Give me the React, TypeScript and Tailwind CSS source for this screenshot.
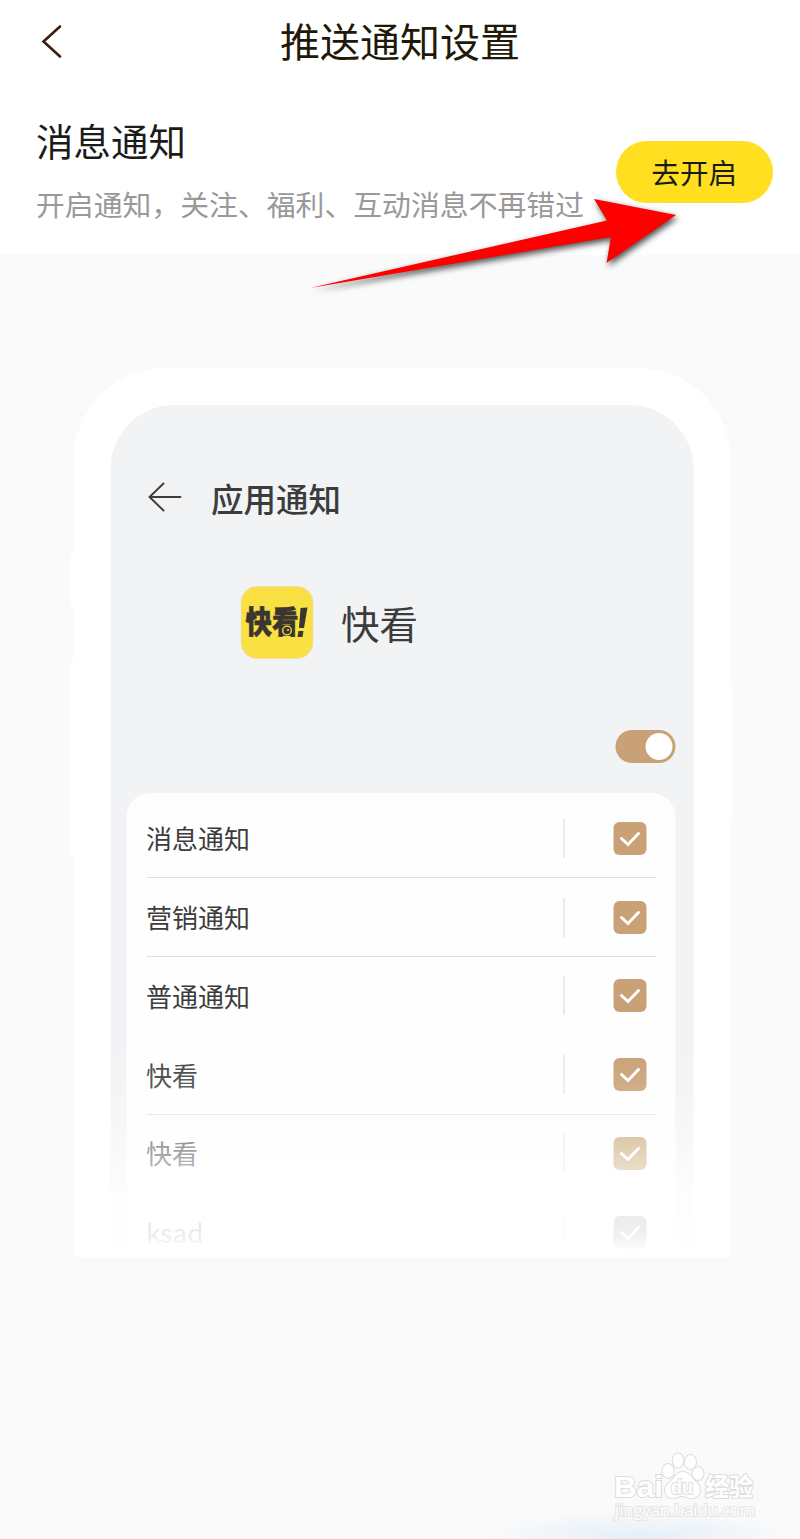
import clsx from "clsx";

const channels = [
  { name: "消息通知", divider: true, box: "bg-[#c9a176]" },
  { name: "营销通知", divider: true, box: "bg-[#c9a176]" },
  { name: "普通通知", divider: false, box: "bg-[#c9a176]" },
  { name: "快看", divider: true, box: "bg-[#c79d70]" },
  { name: "快看", divider: false, box: "bg-[#c3a065]" },
  { name: "ksad", divider: false, box: "bg-[#6e6a68]" },
];

function Checkbox({ className }: { className: string }) {
  return (
    <div className={clsx("flex h-[33px] w-[33px] items-center justify-center rounded-[6px]", className)}>
      <svg width="33" height="33" viewBox="0 0 33 33" fill="none">
        <path d="M8 16.5 L14.5 22.5 L25 11.5" stroke="#fff" strokeWidth="3" strokeLinecap="round" />
      </svg>
    </div>
  );
}

function AppIcon() {
  return (
    <svg width="73" height="73" viewBox="0 0 73 73">
      <rect x="0.5" y="0.5" width="72" height="72" rx="16" fill="#fae143" stroke="#f3d9b5" strokeWidth="0.8" />
      <text
        x="5"
        y="47"
        fontSize="31"
        fontWeight="900"
        fill="#3b3530"
        stroke="#3b3530"
        strokeWidth="0.6"
        textLength="53"
        lengthAdjust="spacingAndGlyphs"
      >
        快看
      </text>
      <path d="M60 22 L67 21.5 L63.5 42 L58.5 42 Z M58 45 L63 45 L62 51 L57 51 Z" fill="#3b3530" />
      <circle cx="46.5" cy="44.5" r="4.3" fill="#3b3530" stroke="#fae143" strokeWidth="1.3" />
      <circle cx="47.5" cy="44" r="1" fill="#fae143" />
    </svg>
  );
}

function PhonePreview() {
  return (
    <div className="relative mx-auto mt-[113px] h-[889px] w-[657px] translate-x-[1.5px] rounded-t-[92px] bg-white px-[37px] pt-[37px]">
      {/* side buttons */}
      <div className="absolute top-[187px] -left-[3px] h-[50px] w-[3px] bg-white" />
      <div className="absolute top-[292px] -left-[3px] h-[198px] w-[3px] bg-white" />
      <div className="absolute top-[313px] -right-[2px] h-[139px] w-[2px] bg-white" />

      <div className="flex h-[852px] flex-col rounded-t-[64px] bg-[#f1f3f5] pt-[66px] pr-[18px] pl-4 text-[#3c3c3c]">
        <div className="flex h-[54px] items-center pl-[21px]">
          <svg width="35" height="32" viewBox="0 0 35 32" fill="none" stroke="#3c3c3c" strokeWidth="1.9" strokeLinecap="round">
            <path d="M2 15 H33 M16 1.5 L2 15 L16 28.5" />
          </svg>
          <span className="ml-[29px] text-[32.5px] leading-[54px] font-medium">应用通知</span>
        </div>

        <div className="mt-[60.5px] flex h-[73px] items-center pl-[114px]">
          <AppIcon />
          <span className="ml-[28px] text-[38.5px] leading-[73px]">快看</span>
        </div>

        <div className="mt-[71.5px] flex h-[33px] w-[60px] items-center justify-end self-end rounded-full bg-[#c9a176] pr-[3px]">
          <div className="h-[27px] w-[27px] rounded-full bg-white" />
        </div>

        <div className="mt-[30px] h-[464px] overflow-hidden rounded-t-[24px] bg-[#fefefe] px-5 pt-[6.5px]">
          {channels.map((channel, i) => (
            <div
              key={i}
              className={clsx(
                "flex h-[78.75px] items-center border-b",
                channel.divider ? "border-[#dedede]" : "border-transparent",
              )}
            >
              <span className="text-[26px] leading-[40px]">{channel.name}</span>
              <div className="ml-auto h-[39px] w-px bg-[#d5d5d5]" />
              <div className="mr-[9px] ml-[49px]">
                <Checkbox className={channel.box} />
              </div>
            </div>
          ))}
        </div>
      </div>

      {/* fades the lower half of the list out */}
      <div className="absolute inset-x-0 bottom-0 h-[217px] bg-[linear-gradient(to_bottom,#ffffff00_0%,#ffffff20_17%,#ffffff50_37%,#ffffff88_52%,#ffffffcc_70%,#ffffffdc_80%,#ffffffe6_90%,#fff_98%)]" />
    </div>
  );
}

function PointerArrow() {
  return (
    <svg
      className="pointer-events-none absolute top-[180px] left-[300px] drop-shadow-[2px_3px_3px_rgba(0,0,0,0.7)]"
      width="390"
      height="120"
      viewBox="300 180 390 120"
    >
      <path d="M310 288 L607 220.5 L594 199 L676 215 L606.5 263 L611 237 Z" fill="#fe0000" />
    </svg>
  );
}

function Watermark() {
  return (
    <svg className="absolute right-[38px] bottom-[12px]" width="152" height="76" viewBox="610 1451 152 76">
      <g fill="#fff" stroke="#dcdcdc" strokeWidth="2" paintOrder="stroke">
        <ellipse cx="668" cy="1471" rx="5.5" ry="7" />
        <ellipse cx="678" cy="1460.5" rx="5.3" ry="7" />
        <ellipse cx="690.5" cy="1462" rx="5.5" ry="7" />
        <ellipse cx="698" cy="1473.5" rx="5.5" ry="6.5" />
        <path d="M683 1472 C690 1472 692 1479 697 1483 C702 1488 701 1498 692 1498 C686 1498 686 1496 682 1496 C678 1496 678 1498 673 1498 C664 1498 663 1488 668 1484 C674 1479 676 1472 683 1472 Z" />
        <g fontWeight="700" className="font-['Liberation_Sans',sans-serif]">
          <text x="614" y="1497" fontSize="30" textLength="49" lengthAdjust="spacingAndGlyphs">
            Bai
          </text>
          <text x="671" y="1494" fontSize="20" textLength="22" lengthAdjust="spacingAndGlyphs">
            du
          </text>
        </g>
        <text x="705" y="1496" fontSize="25" fontWeight="700" textLength="48" lengthAdjust="spacingAndGlyphs">
          经验
        </text>
        <text
          x="615"
          y="1516"
          fontSize="16"
          stroke="#e4e4e4"
          textLength="140"
          lengthAdjust="spacingAndGlyphs"
          className="font-['Open_Sans',sans-serif]"
        >
          jingyan.baidu.com
        </text>
      </g>
    </svg>
  );
}

export default function App() {
  return (
    <div className="relative h-[1539px] w-[800px] overflow-hidden bg-[#fafafa] font-['Noto_Sans_CJK_SC',sans-serif]">
      <div className="h-[255px] bg-white">
        <header className="flex h-[84px] items-center justify-center">
          <svg className="absolute left-[40px]" width="24" height="36" viewBox="0 0 24 36" fill="none">
            <path d="M20 2.5 L3.5 17.5 L20 32.5" stroke="#3d1d0c" strokeWidth="2.6" strokeLinecap="round" />
          </svg>
          <h1 className="pb-[4px] text-[40px] leading-[60px] text-[#211807]">推送通知设置</h1>
        </header>

        <section className="flex items-start justify-between pr-[27px] pl-9">
          <div className="pt-[28px]">
            <h2 className="text-[37.5px] leading-[56px] text-[#1b1b1b]">消息通知</h2>
            <p className="mt-[15px] text-[28.85px] leading-[42px] whitespace-nowrap text-[#999]">
              开启通知，关注、福利、互动消息不再错过
            </p>
          </div>
          <button className="mt-[57px] h-[62px] w-[157.5px] shrink-0 rounded-full bg-[#ffdf1f] text-[28.6px] leading-[62px] text-[#1b1b1b]">
            去开启
          </button>
        </section>
      </div>

      <PhonePreview />
      <PointerArrow />

      <div className="absolute -bottom-[32px] left-[480px] h-[62px] w-[320px] bg-[radial-gradient(closest-side,#e2eefa,#fafafa00)]" />
      <Watermark />
    </div>
  );
}
